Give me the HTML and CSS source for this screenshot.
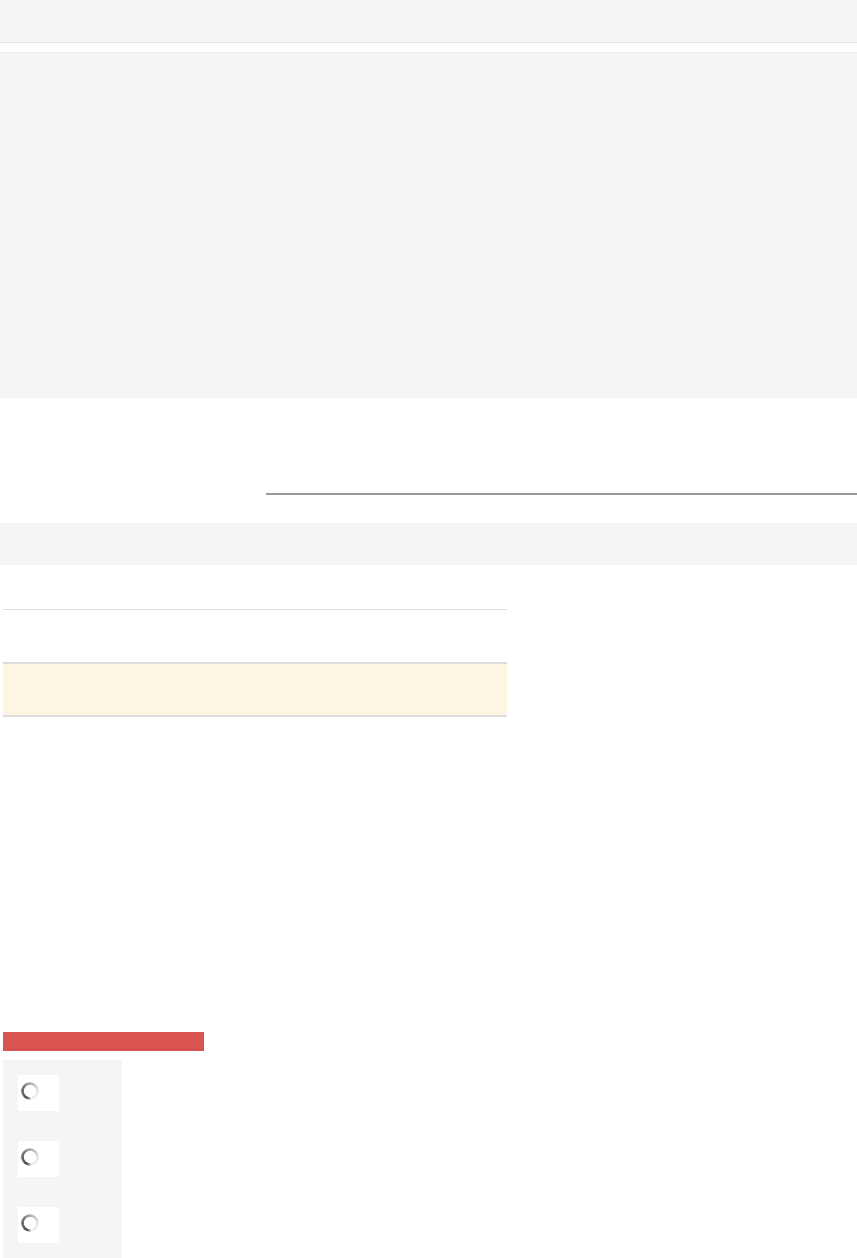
FILE: index.html
```html
<!DOCTYPE html>
<html>
<head>
<meta charset="utf-8">
<link rel="stylesheet" href="styles.css">
</head>
<body>
<header class="topbar"></header>
<section class="hero"></section>
<div class="rule-row"><div class="rule"></div></div>
<div class="band"></div>
<div class="table">
  <div class="row"></div>
  <div class="row warning"></div>
</div>
<div class="alert-bar"></div>
<div class="loader-panel">
  <div class="loader-box"><div class="spinner"></div></div>
  <div class="loader-box"><div class="spinner"></div></div>
  <div class="loader-box"><div class="spinner"></div></div>
</div>
</body>
</html>
```

FILE: styles.css
```css
html, body {
  margin: 0;
  padding: 0;
  background: #ffffff;
  font-family: "Liberation Sans", Arial, sans-serif;
}
body {
  width: 857px;
  height: 1258px;
  overflow: hidden;
}
.topbar {
  height: 42px;
  background: #f5f5f5;
  border-bottom: 1px solid #e4e4e4;
}
.hero {
  margin-top: 9px;
  height: 345px;
  background: #f5f5f5;
  border-top: 1px solid #efefef;
}
.rule-row {
  padding-top: 95px;
  padding-left: 266px;
}
.rule {
  height: 2px;
  background: #999999;
}
.band {
  margin-top: 28px;
  height: 42px;
  background: #f4f4f4;
}
.table {
  margin: 44px 0 0 3px;
  width: 504px;
  border-top: 1px solid #dddddd;
}
.row {
  height: 52px;
}
.row.warning {
  height: 51px;
  background: #fdf6e3;
  border-top: 2px solid #dddddd;
  border-bottom: 2px solid #dddddd;
}
.alert-bar {
  margin: 315px 0 0 3px;
  width: 201px;
  height: 19px;
  background: #d9534f;
}
.loader-panel {
  margin: 9px 0 0 3px;
  width: 119px;
  height: 198px;
  background: #f5f5f5;
  box-sizing: border-box;
  padding: 15px 0 0 15px;
  display: flex;
  flex-direction: column;
  gap: 30px;
}
.loader-box {
  width: 41px;
  height: 36px;
  background: #ffffff;
  padding: 7px 0 0 3px;
  box-sizing: border-box;
}
.spinner {
  width: 18px;
  height: 18px;
  border-radius: 50%;
  background: conic-gradient(from 200deg, #555555 0deg, #777777 100deg, #b5b5b5 170deg, #e6e6e6 250deg, #f2f2f2 330deg, #555555 360deg);
  -webkit-mask: radial-gradient(circle, transparent 5.8px, #000 6.4px);
  mask: radial-gradient(circle, transparent 5.8px, #000 6.4px);
}
```
